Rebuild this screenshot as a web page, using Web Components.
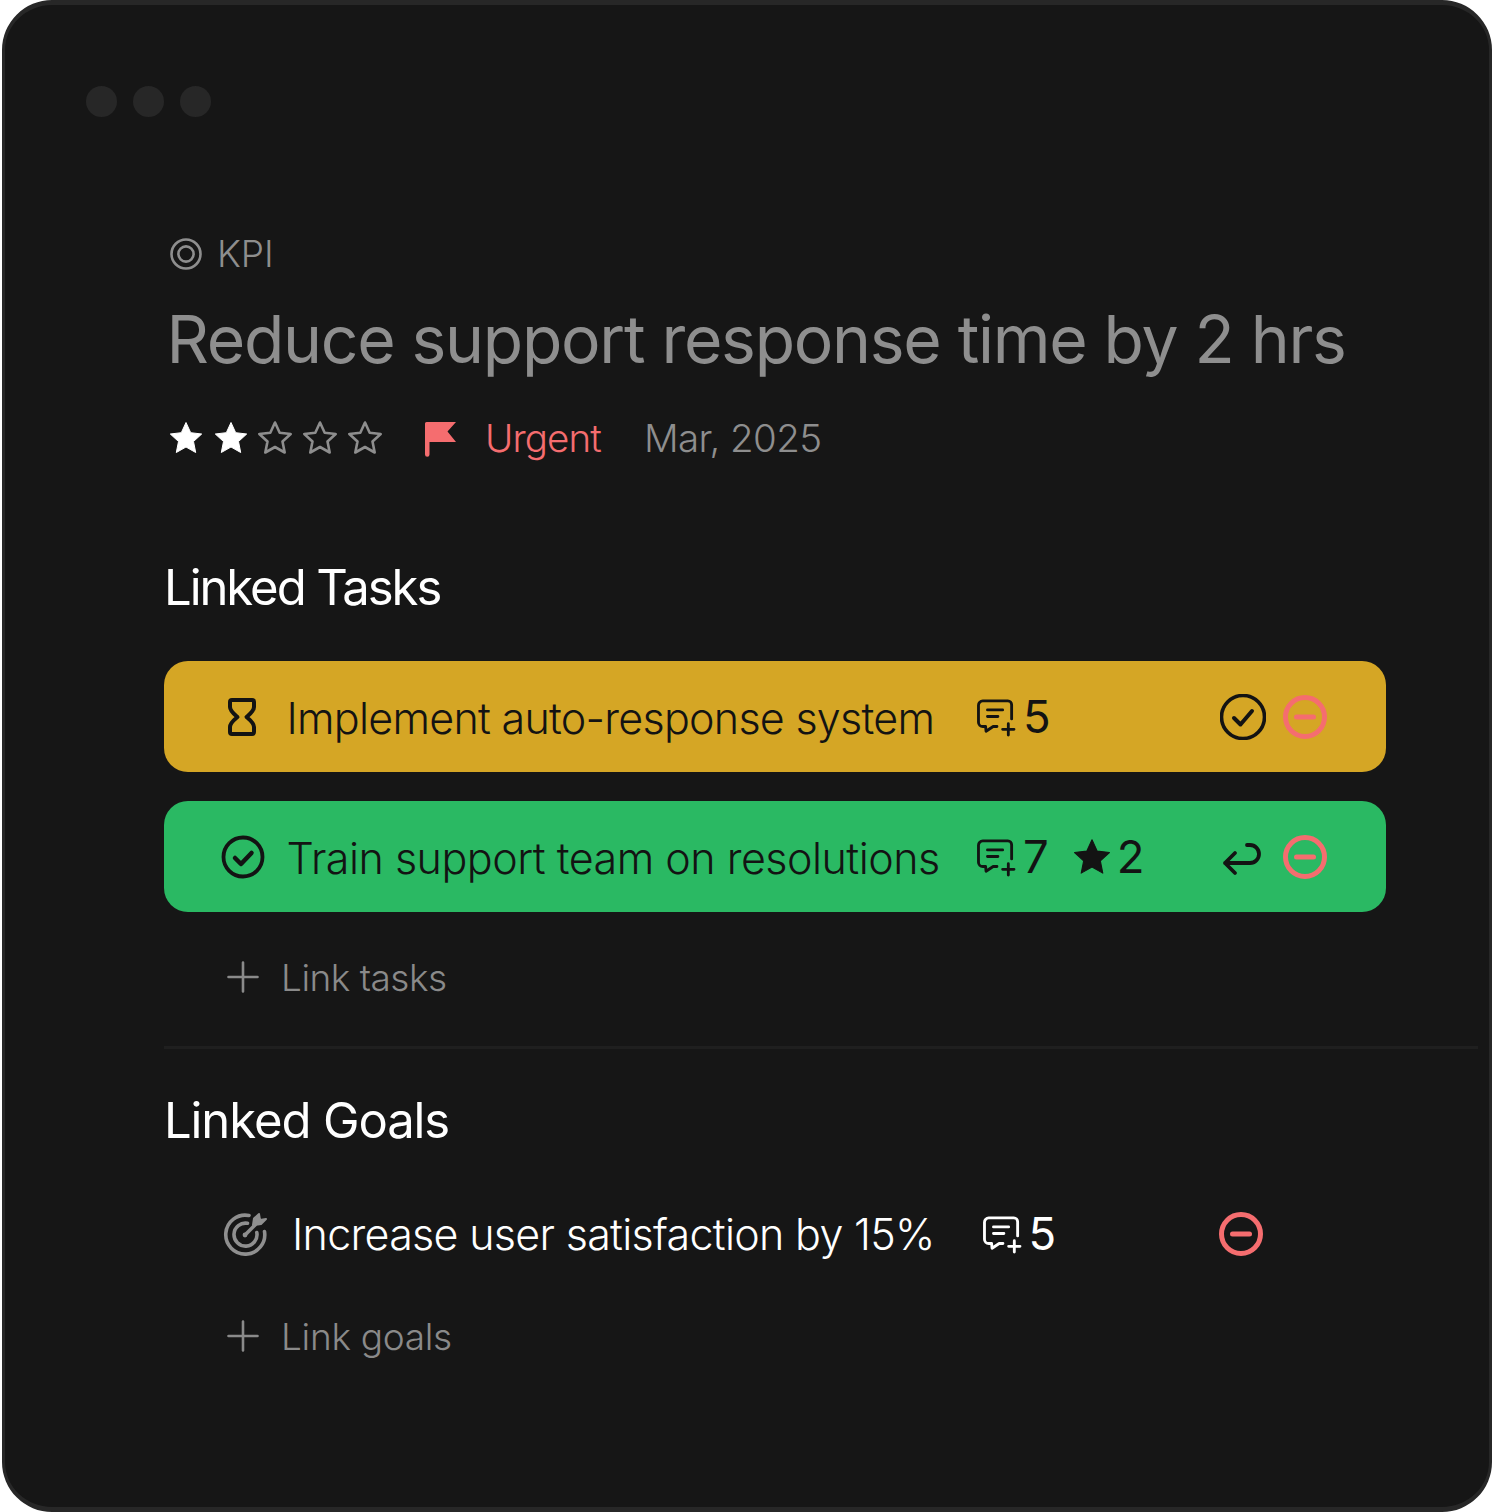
<!DOCTYPE html>
<html lang="en"><head><meta charset="utf-8"><title>KPI</title>
<style>
html,body{margin:0;background:#fff}
body{width:1492px;height:1512px;font-family:Inter,"Liberation Sans",sans-serif}
</style></head><body>
<kpi-window>
  <kpi-header></kpi-header>
  <section-title style="letter-spacing:-2.050px">Linked Tasks</section-title>
  <link-row tone="amber" status="hourglass" comments="5" action="check" style="letter-spacing:-.73px">Implement auto-response system</link-row>
  <link-row tone="green" status="check" comments="7" stars="2" action="return" style="letter-spacing:-.5px">Train support team on resolutions</link-row>
  <add-link>Link tasks</add-link>
  <hr-line></hr-line>
  <section-title class="goals" style="letter-spacing:-1.100px">Linked Goals</section-title>
  <link-row tone="none" status="target" comments="5" style="letter-spacing:-.7px">Increase user satisfaction by 15%</link-row>
  <add-link class="last" style="letter-spacing:-.3px">Link goals</add-link>
</kpi-window>
<script>
const STAR='M18 2.500l4.700 10.200 11 1.300-8.200 7.500 2.200 11-9.700-5.500-9.700 5.500 2.200-11-8.200-7.500 11-1.300z';
const ICONS={
 rings:'<svg viewBox="0 0 32 32" width="32" height="32" fill="none" stroke="currentColor" stroke-width="2.600"><circle cx="16" cy="16" r="14.500"/><circle cx="16" cy="16" r="7.600"/></svg>',
 star:`<svg viewBox="0 0 36 36" width="36" height="36"><path fill="currentColor" stroke="currentColor" stroke-width="1" stroke-linejoin="round" d="${STAR}"/></svg>`,
 bigStar:`<svg viewBox="0 0 36 36" width="40" height="40"><path fill="currentColor" stroke="currentColor" stroke-width="1" stroke-linejoin="round" d="${STAR}"/></svg>`,
 starOutline:`<svg viewBox="0 0 36 36" width="36" height="36"><path fill="none" stroke="currentColor" stroke-width="2.600" stroke-linejoin="round" d="${STAR}"/></svg>`,
 flag:'<svg viewBox="0 0 32 36" width="32" height="36"><path fill="#f56d6f" d="M0 2.500A1.500 1.500 0 0 1 1.500 1H31L22.500 10.500 31 21H4.500V33.500A2.250 2.250 0 0 1 0 33.500z"/></svg>',
 hourglass:'<svg viewBox="0 0 28 38" width="28" height="38" fill="none" stroke="currentColor" stroke-width="4" stroke-linejoin="round"><path d="M4 2H24a2 2 0 0 1 2 2v5c0 4-4 7-7.500 10 3.500 3 7.500 6 7.500 10v5a2 2 0 0 1-2 2H4a2 2 0 0 1-2-2v-5c0-4 4-7 7.500-10C6 16 2 13 2 9V4a2 2 0 0 1 2-2z"/></svg>',
 check:'<svg viewBox="0 0 46 46" width="46" height="46" fill="none" stroke="currentColor" stroke-width="3.600" stroke-linecap="round" stroke-linejoin="round"><circle cx="23" cy="23" r="21.500"/><path stroke-width="4" d="M14 24l6.500 6.500L32 17"/></svg>',
 checkSm:'<svg viewBox="0 0 46 46" width="46" height="46" fill="none" stroke="currentColor" stroke-width="3.800" stroke-linecap="round" stroke-linejoin="round"><circle cx="23" cy="23" r="19.500"/><path stroke-width="4.500" d="M15 24l6 6 10.500-11"/></svg>',
 comment:'<svg viewBox="0 -1 40 38" width="38" height="36" style="overflow:visible" fill="none" stroke="currentColor" stroke-width="3" stroke-linecap="round" stroke-linejoin="round"><path d="M21 28h-4L9.500 33l-.5-5H6a4.500 4.500 0 0 1-4.500-4.500V5.500A4.500 4.500 0 0 1 6 1h26.500A4 4 0 0 1 36.500 5v15"/><path d="M11 10.500h16M11 17.500h11M33 25v12M27 31h12"/></svg>',
 minus:'<svg viewBox="0 0 44 44" width="44" height="44" fill="none" stroke="#f56d6f" stroke-width="5" stroke-linecap="round"><circle cx="22" cy="22" r="19.500"/><path d="M13.500 22h17"/></svg>',
 ret:'<svg viewBox="0 0 46 46" width="46" height="46" fill="none" stroke="currentColor" stroke-width="3.800" stroke-linecap="round" stroke-linejoin="round"><path d="M27 11h3a9 9 0 0 1 0 18H5M15 19 5 29 15 39"/></svg>',
 target:'<svg viewBox="0 0 46 46" width="46" height="46" fill="none" stroke="#8f8f8f" stroke-width="3.600" stroke-linecap="round" stroke-linejoin="round"><path d="M26 4.500A19.500 19.500 0 1 0 41.500 20.500"/><path d="M24.500 12.300A11.500 11.500 0 1 0 33.800 21.500"/><path d="M22.500 23.500 32 14"/><circle cx="22" cy="24" r="2.400" fill="#8f8f8f" stroke="none"/><path fill="#8f8f8f" stroke-width="2" d="M30 14l1-6.500 5-4.500 1 6 6-1-5 5-6.500 1z"/></svg>',
 plus:'<svg viewBox="0 0 32 32" width="32" height="32" fill="none" stroke="currentColor" stroke-width="2.600" stroke-linecap="round"><path d="M16 1.500v29M1.500 16h29"/></svg>'
};
const define=(name,css,render)=>customElements.define(name,class extends HTMLElement{
  connectedCallback(){
    if(this.shadowRoot)return;
    const root=this.attachShadow({mode:'open'});
    root.innerHTML='<style>'+css+'</style>'+render(this);
  }
});
const icon=(k,cls='')=>`<span class="ic ${cls}">${ICONS[k]}</span>`;

define('kpi-window',`
 :host{display:block;box-sizing:border-box;margin-left:2px;width:1490px;height:1512px;background:#161616;border:solid #272727;border-width:5px 3px 5px 3px;border-radius:50px;padding:81px 0 0 81px;overflow:hidden;color:#fff}
 .dots{display:flex;gap:16px;margin-bottom:115px}
 .dots i{width:31px;height:31px;border-radius:50%;background:#272727}
`,()=>`<div class="dots"><i></i><i></i><i></i></div><slot></slot>`);

define('kpi-header',`
 :host{display:block;margin-left:84px;color:#8e8e8e}
 .kpi{display:flex;align-items:center;gap:15px;height:44px;font-size:37px;font-weight:300;line-height:44px;letter-spacing:-.1px}
 .ic{display:flex;flex:none}
 h1{margin:23px 0 0 -3.500px;font-size:66px;font-weight:400;line-height:80px;white-space:nowrap;letter-spacing:-1.300px}
 .meta{display:flex;align-items:center;height:60px;margin-top:29px;font-size:38.500px;font-weight:300;letter-spacing:-.6px}
 .stars{display:flex;gap:8.700px;margin-left:-2px;width:257px}
 .meta>.ic{position:relative;top:1px}
 .on{color:#fff}.off{color:#8e8e8e}
 .urgent{color:#f56d6f;margin-left:28px;width:159px;letter-spacing:-.9px}
`,()=>`<div class="kpi">${icon('rings')}<span>KPI</span></div>
 <h1>Reduce support response time by 2 hrs</h1>
 <div class="meta"><span class="stars">${icon('star','on')}${icon('star','on')}${icon('starOutline','off')}${icon('starOutline','off')}${icon('starOutline','off')}</span>${icon('flag')}<span class="urgent">Urgent</span><span>Mar, 2025</span></div>`);

define('section-title',`
 :host{display:block;margin:90px 0 0 78px;font-size:49px;line-height:60px;font-weight:400;color:#fff}
 :host(.goals){margin-top:42px}
`,()=>`<slot></slot>`);

define('link-row',`
 :host{display:grid;box-sizing:border-box;grid-template-columns:122.500px 690.500px 220px 1fr;align-items:center;width:1222px;height:111px;margin:43px 0 0 78px;border-radius:24px;color:#131313;font-size:43px;font-weight:300;white-space:nowrap}
 :host([tone=amber]){background:#d5a625}
 :host([tone=green]){background:#2ab963;margin-top:29px}
 :host([tone=none]){color:#fff;grid-template-columns:128px 691px 213px 1fr;margin-top:27px}
 :host([tone=none]) .meta b{margin-left:7.500px}
 :host([tone=none]) .tx{padding-top:0}
 .tx{padding-top:2px}
 .ic{display:flex;flex:none}
 .st{padding-left:56px;display:flex}
 .st.hourglass{padding-left:64px}
 .st.target{padding-left:59px}
 .meta{display:flex;align-items:center;font-size:45.500px;font-weight:400;letter-spacing:0}
 .meta b{font-weight:400;margin:0 0 0 8px}
 .meta .star{margin-left:23px}
 .meta .star + b{margin-left:5px}
 .acts{display:flex;align-items:center;gap:17px;padding-left:23px}
`,h=>{
  const a=n=>h.getAttribute(n);
  const st={hourglass:'hourglass',check:'checkSm',target:'target'}[a('status')];
  const act=a('action');
  return `<div class="st ${a('status')}">${icon(st)}</div><div class="tx"><slot></slot></div>
  <div class="meta">${icon('comment')}<b>${a('comments')}</b>${a('stars')?`${icon('bigStar','star')}<b>${a('stars')}</b>`:''}</div>
  <div class="acts">${act?icon(act==='check'?'check':'ret'):''}${icon('minus')}</div>`;
});

define('add-link',`
 :host{display:flex;align-items:center;gap:22px;margin:35px 0 0 141px;height:60px;color:#8a8a8a;font-size:37px;font-weight:300;letter-spacing:-.5px}
 .ic{display:flex}
 :host(.last){margin-top:17px}
`,()=>`${icon('plus')}<slot></slot>`);

define('hr-line',`
 :host{display:block;width:1314px;height:3px;margin:39px 0 0 78px;background:#1f1f1f}
`,()=>``);
</script>
</body></html>
